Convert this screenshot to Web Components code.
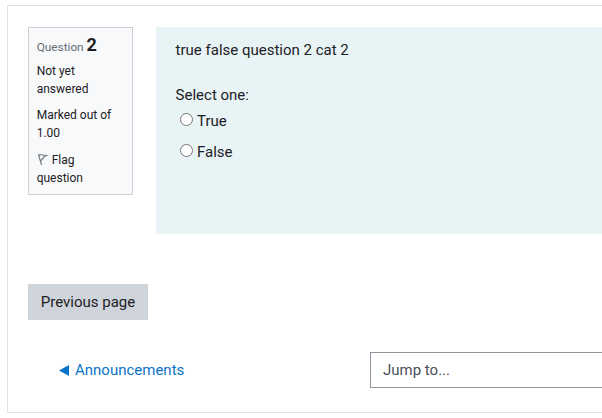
<!DOCTYPE html>
<html>
<head>
<meta charset="utf-8">
<style>
html, body { margin: 0; height: 100%; overflow: hidden; background: #fff; }
body { font-family: Roboto, "Liberation Sans", sans-serif; color: #1d2125; }
</style>
</head>
<body>
<quiz-page>
    <div slot="question">
        <quiz-question number="2">
            <span slot="state">Not yet answered</span>
            <span slot="grade">Marked out of 1.00</span>
            <span slot="text">true false question 2 cat 2</span>
            <quiz-choice>True</quiz-choice>
            <quiz-choice>False</quiz-choice>
        </quiz-question>
    </div>
    <quiz-button slot="button">Previous page</quiz-button>
    <activity-nav slot="nav">Announcements</activity-nav>
</quiz-page>

<script>
class QuizPage extends HTMLElement {
    constructor() {
        super();
        this.attachShadow({ mode: "open" });
        this.shadowRoot.innerHTML = `
<style>
:host { display: block; margin: 5px 0 0 7px; width: 800px; height: 408px; box-sizing: border-box; border: 1px solid #dee2e6; padding: 21px 20px 0; }
.button { margin-top: 50px; }
.nav { margin-top: 32px; }
</style>
<slot name="question"></slot>
<div class="button"><slot name="button"></slot></div>
<div class="nav"><slot name="nav"></slot></div>
`;
    }
}
customElements.define("quiz-page", QuizPage);

class QuizQuestion extends HTMLElement {
    constructor() {
        super();
        this.attachShadow({ mode: "open" });
        this.shadowRoot.innerHTML = `
<style>
:host { display: flex; gap: 23px; align-items: flex-start; }
.info { flex: none; width: 105px; height: 168px; box-sizing: border-box; background: #f8f9fa; border: 1px solid #cad0d7; padding: 6px 7.7px; font-size: 12px; line-height: 18px; }
.info p { margin: 0 0 8px; }
.no { color: #636c75; font-size: 11.8px; margin: 0 0 4px; line-height: 22px; }
.no b { font-size: 18px; color: #1d2125; font-weight: 700; }
.flag { display: inline-block; vertical-align: -2px; }
.flagrow { margin-top: 9px; }
.content { flex: none; width: 640px; height: 207px; box-sizing: border-box; background: #e7f3f5; padding: 14px 19.6px; font-size: 15px; line-height: 19px; }
.text { margin-bottom: 26px; }
.choices { padding-left: 4.4px; margin-top: 1px; }
</style>
<div class="info">
    <div class="no">Question <b id="num"></b></div>
    <p><slot name="state"></slot></p>
    <p><slot name="grade"></slot></p>
    <div class="flagrow"><svg class="flag" width="12" height="12" viewBox="0 0 12 12" fill="none" stroke="#777d83" stroke-width="1.2"><path d="M1.5 .5 L4.5 11 M1.5 .5 L9.5 1.5 L6 3.5 L6 4.5 L3.5 7"/></svg> Flag<br>question</div>
</div>
<div class="content">
    <div class="text"><slot name="text"></slot></div>
    <div>Select one:</div>
    <div class="choices"><slot></slot></div>
</div>
`;
        this.shadowRoot.getElementById("num").textContent = this.getAttribute("number");
    }
}
customElements.define("quiz-question", QuizQuestion);

class QuizChoice extends HTMLElement {
    constructor() {
        super();
        this.attachShadow({ mode: "open" });
        this.shadowRoot.innerHTML = `
<style>
:host { display: flex; align-items: center; height: 31px; gap: 4px; }
input { margin: 0 0 4px; width: 13px; height: 13px; }
</style>
<input type="radio" name="answer"><span><slot></slot></span>
`;
    }
}
customElements.define("quiz-choice", QuizChoice);

class QuizButton extends HTMLElement {
    constructor() {
        super();
        this.attachShadow({ mode: "open" });
        this.shadowRoot.innerHTML = `
<style>
:host { display: inline-flex; align-items: center; justify-content: center; width: 120px; height: 36px; background: #ced4da; color: #1d2125; font-size: 15px; }
</style>
<slot></slot>
`;
    }
}
customElements.define("quiz-button", QuizButton);

class ActivityNav extends HTMLElement {
    constructor() {
        super();
        this.attachShadow({ mode: "open" });
        this.shadowRoot.innerHTML = `
<style>
:host { display: flex; align-items: center; height: 36px; font-size: 15px; }
.link { flex: none; display: flex; align-items: center; gap: 6.5px; width: 342px; padding-left: 30.5px; box-sizing: border-box; color: #0873c8; }
.jump { flex: none; width: 400px; height: 36px; box-sizing: border-box; border: 1px solid #8f959e; padding: 0 12px; display: flex; align-items: center; color: #495057; }
</style>
<div class="link"><svg width="10" height="11" viewBox="0 0 10 11"><path d="M0 5.5 L10 0 V11 Z" fill="currentColor"/></svg><span><slot></slot></span></div>
<div class="jump">Jump to...</div>
`;
    }
}
customElements.define("activity-nav", ActivityNav);
</script>
</body>
</html>
